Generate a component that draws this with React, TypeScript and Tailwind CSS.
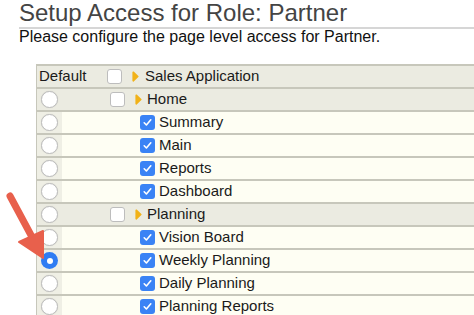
import React from 'react';

type Row =
  | { kind: 'group'; label: string; level: 1 }
  | { kind: 'item'; label: string; selected?: boolean };

const rows: Row[] = [
  { kind: 'group', label: 'Home', level: 1 },
  { kind: 'item', label: 'Summary' },
  { kind: 'item', label: 'Main' },
  { kind: 'item', label: 'Reports' },
  { kind: 'item', label: 'Dashboard' },
  { kind: 'group', label: 'Planning', level: 1 },
  { kind: 'item', label: 'Vision Board' },
  { kind: 'item', label: 'Weekly Planning', selected: true },
  { kind: 'item', label: 'Daily Planning' },
  { kind: 'item', label: 'Planning Reports' },
];

function Radio({ checked }: { checked?: boolean }) {
  if (checked) {
    return (
      <span className="flex h-[17px] w-[17px] items-center justify-center rounded-full bg-[#2f7cf3]">
        <span className="h-[6px] w-[6px] rounded-full bg-white" />
      </span>
    );
  }
  return <span className="h-[17px] w-[17px] rounded-full border border-[#bdbdbd] bg-white shadow-[0_0_1px_rgba(0,0,0,0.15)]" />;
}

function EmptyBox() {
  return <span className="h-[15px] w-[15px] shrink-0 rounded-[3px] border border-[#bdbdbd] bg-white" />;
}

function CheckedBox() {
  return (
    <span className="flex h-[15px] w-[15px] shrink-0 items-center justify-center rounded-[3px] bg-[#3a83f5]">
      <svg width="11" height="11" viewBox="0 0 11 11">
        <path d="M2.2 5.8 L4.4 8 L8.8 2.8" fill="none" stroke="white" strokeWidth="1.6" strokeLinecap="round" strokeLinejoin="round" />
      </svg>
    </span>
  );
}

function Caret() {
  return (
    <svg width="7" height="11" viewBox="0 0 7 11" className="shrink-0">
      <path d="M1.2 1.2 L5.8 5.5 L1.2 9.8 Z" fill="#f1b219" stroke="#f1b219" strokeWidth="1.6" strokeLinejoin="round" />
    </svg>
  );
}

export default function App() {
  return (
    <div className="relative h-[315px] w-[474px] overflow-hidden bg-white font-['Liberation_Sans',Arial,sans-serif]">
      {/* Heading */}
      <div className="ml-[19px] border-b-2 border-[#d6d6d6] pt-[1px] pb-[2px] text-[24px] leading-none text-[#444]">
        Setup Access for Role: Partner
      </div>
      <p className="ml-[19px] text-[16px] leading-none text-[#111]">
        Please configure the page level access for Partner.
      </p>

      {/* Access table */}
      <div className="mt-[19px] ml-[36px] border-t-2 border-l border-[#c7c7bb] text-[15px] text-[#1a1a1a]">
        <div className="flex h-[23px] items-center border-b-2 border-[#c7c7bb] bg-[#ebebe1]">
          <span className="w-[70px] pl-[2px]">Default</span>
          <EmptyBox />
          <span className="ml-[10px]">
            <Caret />
          </span>
          <span className="ml-[6px]">Sales Application</span>
        </div>

        {rows.map((row) =>
          row.kind === 'group' ? (
            <div key={row.label} className="flex h-[23px] border-b-2 border-[#c7c7bb] bg-[#ebebe1]">
              <div className="flex w-[25px] items-center justify-center">
                <Radio />
              </div>
              <div className="flex items-center pl-[48px]">
                <EmptyBox />
                <span className="ml-[10px]">
                  <Caret />
                </span>
                <span className="ml-[5px]">{row.label}</span>
              </div>
            </div>
          ) : (
            <div key={row.label} className="flex h-[23px] border-b-2 border-[#c7c7bb] bg-[#fefef3]">
              <div className="flex w-[25px] items-center justify-center bg-[#efefe5]">
                <Radio checked={row.selected} />
              </div>
              <div className="flex items-center pl-[78px]">
                <CheckedBox />
                <span className="ml-[4px]">{row.label}</span>
              </div>
            </div>
          )
        )}
      </div>

      {/* Annotation arrow */}
      <svg className="pointer-events-none absolute left-0 top-0" width="474" height="315" viewBox="0 0 474 315">
        <line x1="10" y1="196" x2="32" y2="237" stroke="#e8604c" strokeWidth="7" strokeLinecap="round" />
        <path d="M19 242 L43 231 L43 258 Z" fill="#e8604c" stroke="#e8604c" strokeWidth="2" strokeLinejoin="round" />
      </svg>
    </div>
  );
}
